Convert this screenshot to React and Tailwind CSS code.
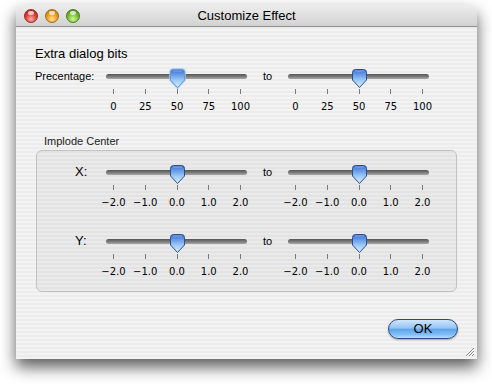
import React from 'react';

const pct = ['0', '25', '50', '75', '100'];
const axis = ['\u22122.0', '\u22121.0', '0.0', '1.0', '2.0'];

// aqua style slider thumb
const Thumb = ({ left, focused }) => (
  <svg
    width="17"
    height="21"
    viewBox="-1 -1 17 21"
    className="absolute top-[0px]"
    style={{ left: left - 8 }}
  >
    <defs>
      <linearGradient id="thumbFill" x1="0" y1="0" x2="0" y2="1">
        <stop offset="0" stopColor="#3f6fc8" />
        <stop offset="0.25" stopColor="#5f95e6" />
        <stop offset="0.6" stopColor="#9ccaf6" />
        <stop offset="1" stopColor="#dcefff" />
      </linearGradient>
    </defs>
    {focused && (
      <path
        d="M3.5 0.5 H11.5 Q14.5 0.5 14.5 3.5 V11 L7.5 18.5 L0.5 11 V3.5 Q0.5 0.5 3.5 0.5 Z"
        fill="none"
        stroke="#9fc8f4"
        strokeWidth="2.5"
      />
    )}
    <path
      d="M3.5 0.5 H11.5 Q14.5 0.5 14.5 3.5 V11 L7.5 18.5 L0.5 11 V3.5 Q0.5 0.5 3.5 0.5 Z"
      fill="url(#thumbFill)"
      stroke={focused ? '#6f97d0' : '#2d4d8c'}
      strokeWidth="1"
    />
    <path d="M3 2 H12" stroke="#ffffff" strokeOpacity="0.35" strokeWidth="1" />
  </svg>
);

const Slider = ({ ticks, value = 2, focused }) => {
  const W = 141;
  const pad = 7;
  const pos = (i) => pad + ((W - 2 * pad) * i) / (ticks.length - 1);
  return (
    <div className="relative w-[141px] h-[47px] shrink-0">
      <div className="pt-[6px]">
        <div className="h-[5px] rounded-full bg-[linear-gradient(to_bottom,#555555,#7a7a7a_50%,#a9a9a9)]" />
      </div>
      {ticks.map((t, i) => (
        <div
          key={'t' + i}
          className="absolute top-[21px] w-px h-[5px] bg-[#7a7a7a]"
          style={{ left: pos(i) }}
        />
      ))}
      {ticks.map((t, i) => (
        <span
          key={'l' + i}
          className="absolute top-[32px] -translate-x-1/2 text-[10px] leading-[14px] text-black whitespace-nowrap font-['DejaVu_Sans',sans-serif]"
          style={{ left: pos(i) + 0.5 }}
        >
          {t}
        </span>
      ))}
      <Thumb left={pos(value) + 0.5} focused={focused} />
    </div>
  );
};

const Light = ({ color }) => {
  const fills = {
    red: 'bg-[radial-gradient(circle_at_50%_75%,#ffb0a8_0%,#e3453c_45%,#a8120f_100%)] border-[#8e2a25]',
    orange: 'bg-[radial-gradient(circle_at_50%_75%,#ffe39a_0%,#f1a21d_45%,#b86a05_100%)] border-[#9c6a1c]',
    green: 'bg-[radial-gradient(circle_at_50%_75%,#d8f7a0_0%,#7cc433_45%,#3e7f0f_100%)] border-[#4c7a24]',
  };
  return (
    <div className={'relative w-[14px] h-[14px] rounded-full border ' + fills[color]}>
      <div className="absolute left-[3px] top-[1px] w-[6px] h-[4px] rounded-full bg-white/70" />
    </div>
  );
};

export default function App() {
  return (
    <div className="w-[492px] h-[384px] bg-white overflow-hidden font-['Liberation_Sans',Arial,sans-serif] text-black">
      <div className="ml-[16px] mt-[5px] w-[461px] h-[354px] flex flex-col rounded-t-[6px] overflow-hidden relative shadow-[0_8px_16px_rgba(0,0,0,0.65)]">
        {/* title bar */}
        <div className="h-[22px] shrink-0 grid grid-cols-[1fr_auto_1fr] items-center bg-[linear-gradient(to_bottom,#ededed,#d2d2d2)] border-b border-[#8f8f8f]">
          <div className="flex items-center gap-[7px] pl-[8px]">
            <Light color="red" />
            <Light color="orange" />
            <Light color="green" />
          </div>
          <div className="text-[13px] leading-[16px]">Customize Effect</div>
          <div />
        </div>

        {/* content */}
        <div className="flex-1 flex flex-col pl-[19px] pt-[19px] bg-[repeating-linear-gradient(to_bottom,#ececec_0px,#ececec_2px,#f3f3f3_2px,#f3f3f3_4px)]">
          <div className="text-[13px] leading-[16px]">Extra dialog bits</div>

          <div className="flex mt-[6px]">
            <div className="w-[71px] h-[16px] flex items-center text-[11px]">Precentage:</div>
            <Slider ticks={pct} focused />
            <div className="ml-[16px] w-[25px] h-[16px] flex items-center text-[11px]">to</div>
            <Slider ticks={pct} />
          </div>

          <div className="mt-[20px] ml-[9px] text-[11px] leading-[13px] text-[#222]">Implode Center</div>
          <div className="mt-[2px] ml-[1px] w-[421px] h-[142px] rounded-[6px] border border-[#c2c2c2] bg-black/[0.035] pt-[13px]">
            <div className="flex">
              <div className="w-[69px] pl-[38px] h-[16px] flex items-center text-[13px]">X:</div>
              <Slider ticks={axis} />
              <div className="ml-[16px] w-[25px] h-[16px] flex items-center text-[11px]">to</div>
              <Slider ticks={axis} />
            </div>
            <div className="flex mt-[22px]">
              <div className="w-[69px] pl-[38px] h-[16px] flex items-center text-[13px]">Y:</div>
              <Slider ticks={axis} />
              <div className="ml-[16px] w-[25px] h-[16px] flex items-center text-[11px]">to</div>
              <Slider ticks={axis} />
            </div>
          </div>

          <div className="flex justify-end pr-[19px] mt-[27px]">
            <button className="w-[70px] h-[20px] rounded-full border border-[#2f4a86] text-[13px] leading-[18px] bg-[linear-gradient(to_bottom,#cfe6fd_0%,#94c4f4_45%,#5ea3ec_52%,#7fbdf4_80%,#b5e0ff_100%)] shadow-[0_1px_2px_rgba(0,0,0,0.3)]">
              OK
            </button>
          </div>
        </div>

        {/* resize grip */}
        <svg width="11" height="11" className="absolute right-[2px] bottom-[2px]">
          <path d="M10 2 L2 10 M10 5 L5 10 M10 8 L8 10" stroke="#8a8a8a" strokeWidth="1" />
          <path d="M10 3 L3 10 M10 6 L6 10 M10 9 L9 10" stroke="#ffffff" strokeWidth="1" />
        </svg>
      </div>
    </div>
  );
}
